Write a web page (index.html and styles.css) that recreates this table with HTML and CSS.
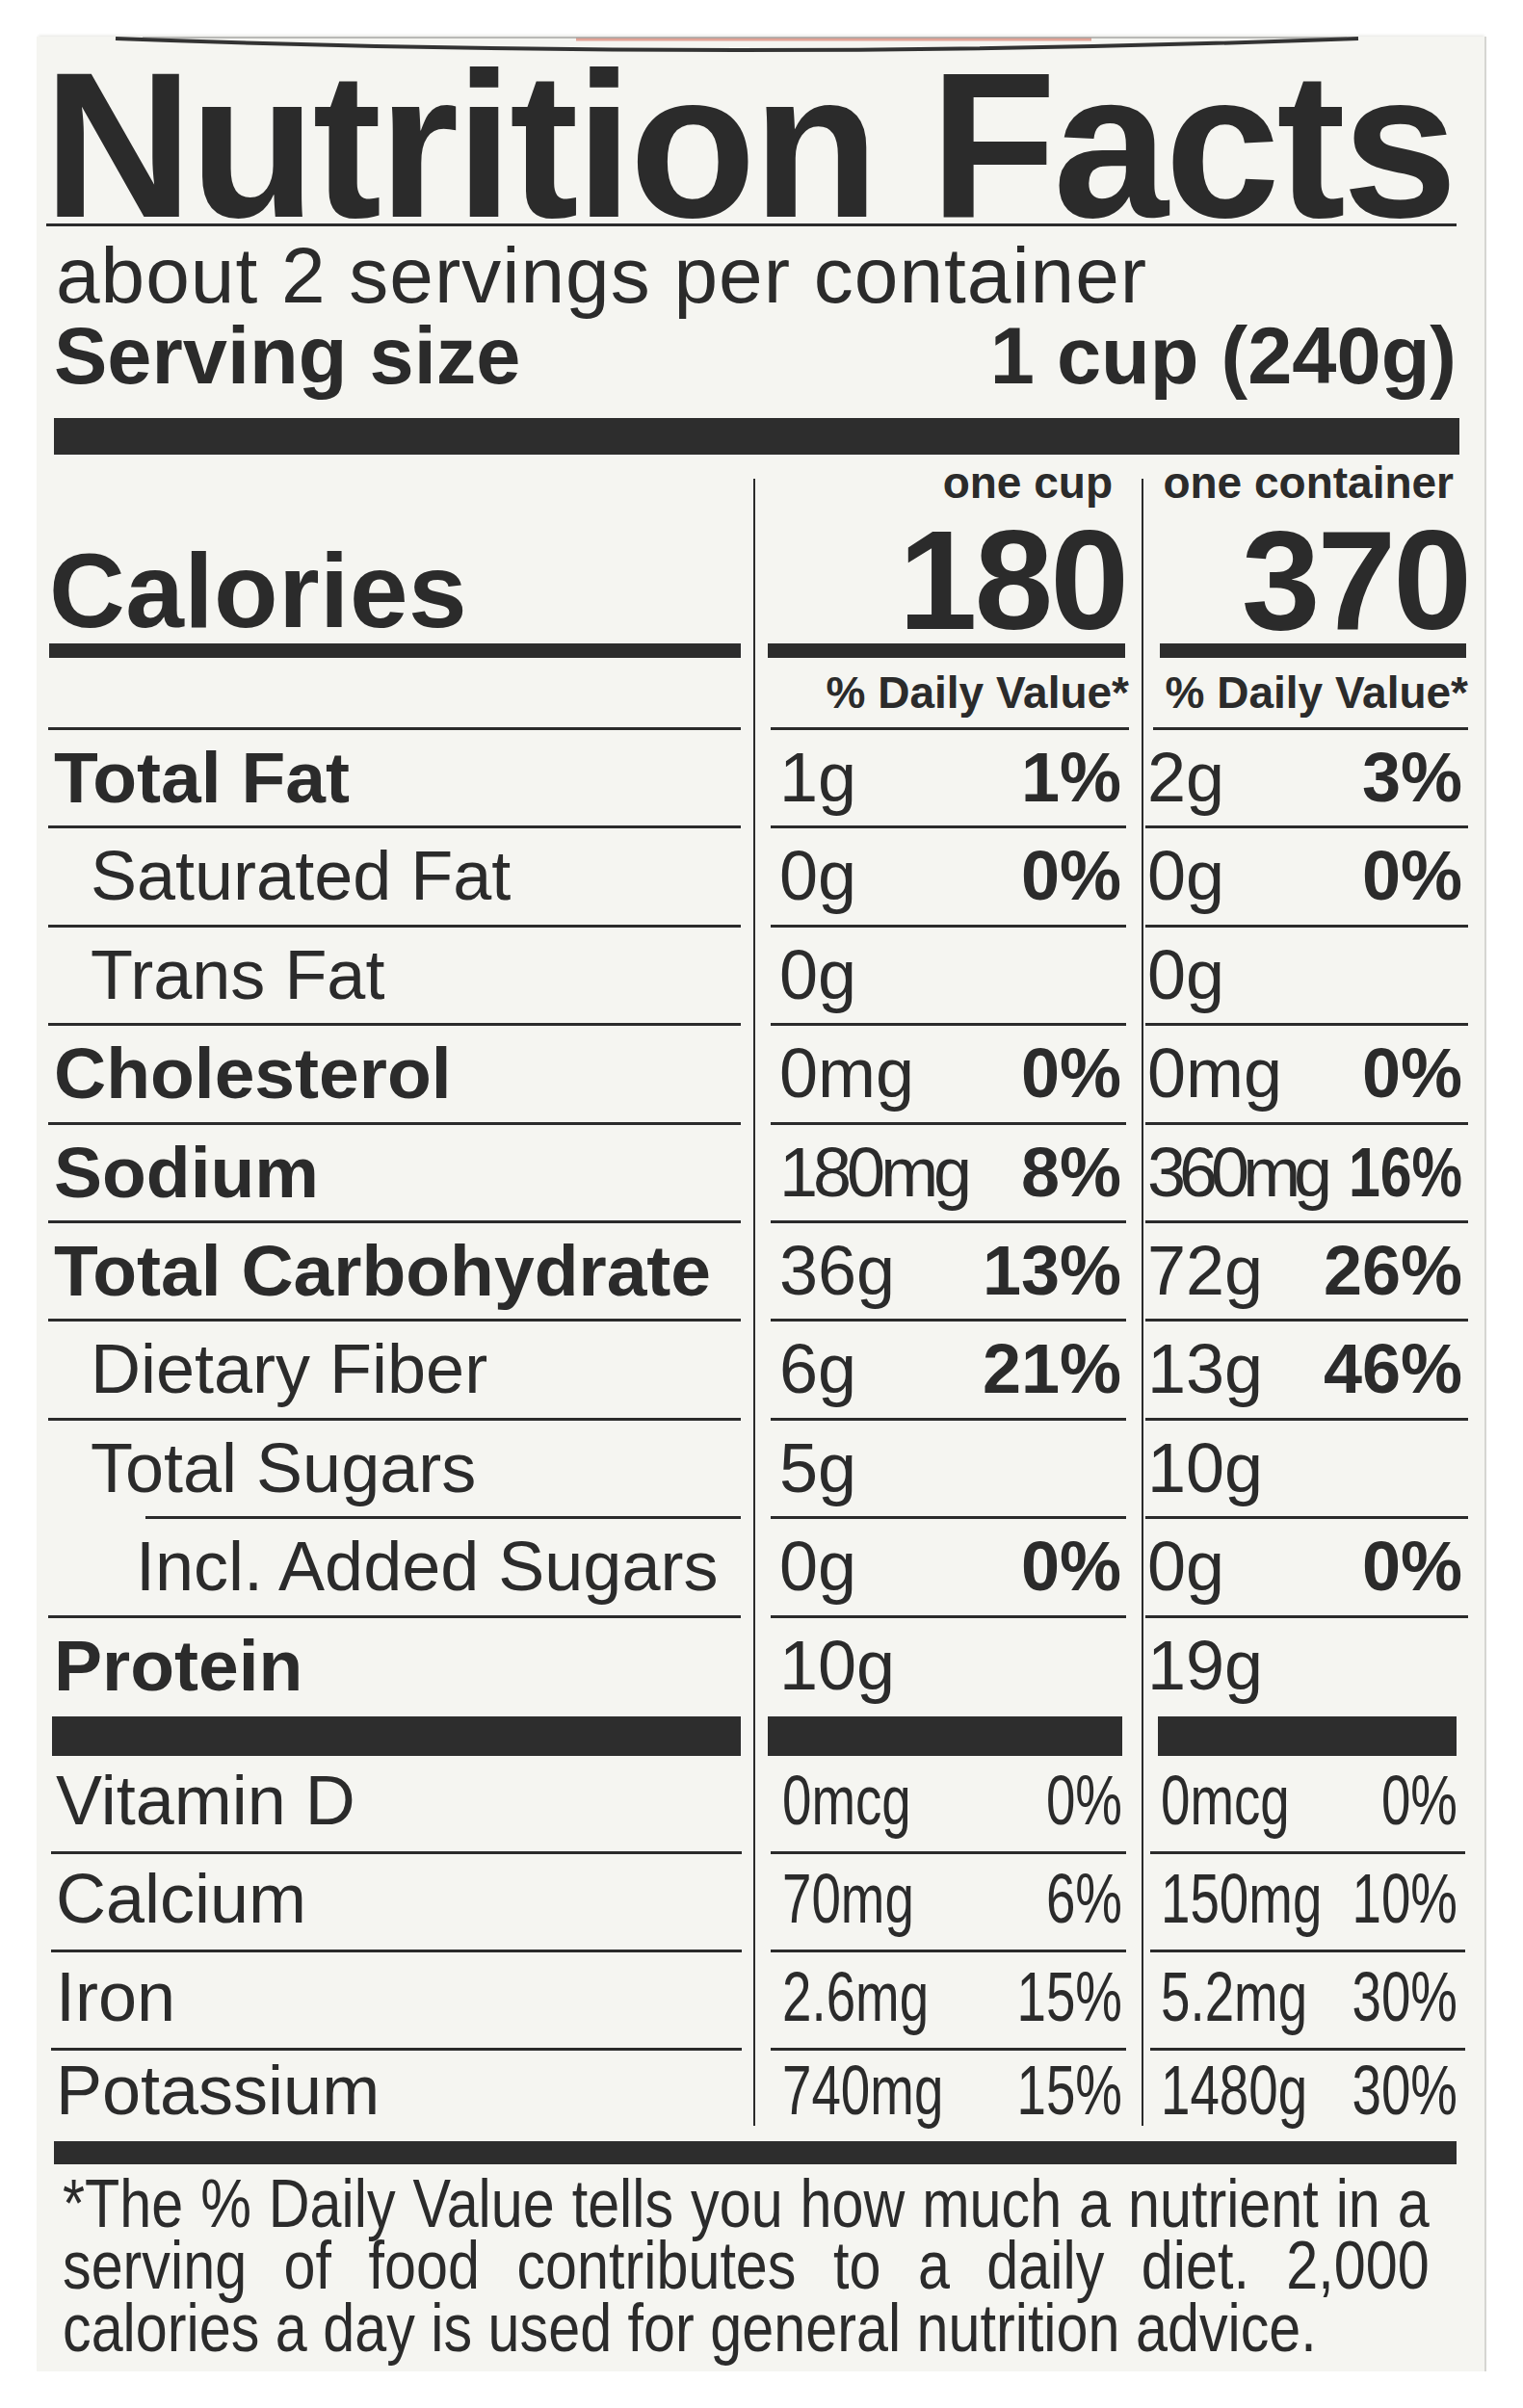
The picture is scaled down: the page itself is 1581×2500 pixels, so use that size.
FILE: index.html
```html
<!DOCTYPE html>
<html lang="en">
<head>
<meta charset="utf-8">
<title>Nutrition Facts</title>
<link rel="stylesheet" href="styles.css">
</head>
<body>
<div class="card">
  <svg class="rim" width="1505" height="24" viewBox="0 0 1505 24" aria-hidden="true">
    <path d="M560 3 L1095 3" stroke="#d2604c" stroke-width="3" stroke-opacity=".55" fill="none"/>
    <path d="M82 2 Q727 26 1372 2" stroke="#333" stroke-width="4" fill="none"/>
    <path d="M110 1 L1360 1" stroke="#555" stroke-width="1.5" stroke-opacity=".5" fill="none"/>
  </svg>

  <h1 class="title">Nutrition Facts</h1>
  <div class="servings">about 2 servings per container</div>
  <div class="size"><span>Serving size</span><span>1 cup (240g)</span></div>
  <div class="bar bar-top"></div>

  <div class="table">
    <div class="col col-label">
      <div class="hdr"><span class="cal">Calories</span></div>
      <div class="calbar"></div>
      <div class="dv"></div>
      <div class="row b">Total Fat</div>
      <div class="row i1">Saturated Fat</div>
      <div class="row i1">Trans Fat</div>
      <div class="row b">Cholesterol</div>
      <div class="row b">Sodium</div>
      <div class="row b">Total Carbohydrate</div>
      <div class="row i1">Dietary Fiber</div>
      <div class="row i1 short">Total Sugars</div>
      <div class="row i2">Incl. Added Sugars</div>
      <div class="row b last">Protein</div>
      <div class="thick"></div>
      <div class="vrow">Vitamin D</div>
      <div class="vrow">Calcium</div>
      <div class="vrow">Iron</div>
      <div class="vrow end">Potassium</div>
    </div>

    <div class="col col-a">
      <div class="hdr"><div class="per">one cup</div><div class="kcal">180</div></div>
      <div class="calbar"></div>
      <div class="dv">% Daily Value*</div>
      <div class="row"><span>1g</span><b>1%</b></div>
      <div class="row"><span>0g</span><b>0%</b></div>
      <div class="row"><span>0g</span></div>
      <div class="row"><span>0mg</span><b>0%</b></div>
      <div class="row"><span class="tight">180mg</span><b>8%</b></div>
      <div class="row"><span>36g</span><b>13%</b></div>
      <div class="row"><span>6g</span><b>21%</b></div>
      <div class="row"><span>5g</span></div>
      <div class="row"><span>0g</span><b>0%</b></div>
      <div class="row last"><span>10g</span></div>
      <div class="thick"></div>
      <div class="vrow"><div class="nv"><span>0mcg</span><span>0%</span></div></div>
      <div class="vrow"><div class="nv"><span>70mg</span><span>6%</span></div></div>
      <div class="vrow"><div class="nv"><span>2.6mg</span><span>15%</span></div></div>
      <div class="vrow end"><div class="nv"><span>740mg</span><span>15%</span></div></div>
    </div>

    <div class="col col-b">
      <div class="hdr"><div class="per">one container</div><div class="kcal">370</div></div>
      <div class="calbar"></div>
      <div class="dv">% Daily Value*</div>
      <div class="row"><span>2g</span><b>3%</b></div>
      <div class="row"><span>0g</span><b>0%</b></div>
      <div class="row"><span>0g</span></div>
      <div class="row"><span>0mg</span><b>0%</b></div>
      <div class="row"><span class="tighter">360mg</span><b class="squeeze">16%</b></div>
      <div class="row"><span>72g</span><b>26%</b></div>
      <div class="row"><span>13g</span><b>46%</b></div>
      <div class="row"><span>10g</span></div>
      <div class="row"><span>0g</span><b>0%</b></div>
      <div class="row last"><span>19g</span></div>
      <div class="thick"></div>
      <div class="vrow"><div class="nv"><span>0mcg</span><span>0%</span></div></div>
      <div class="vrow"><div class="nv"><span>150mg</span><span>10%</span></div></div>
      <div class="vrow"><div class="nv"><span>5.2mg</span><span>30%</span></div></div>
      <div class="vrow end"><div class="nv"><span>1480g</span><span>30%</span></div></div>
    </div>
  </div>

  <div class="bar bar-bottom"></div>

  <div class="foot">
    <div class="fl just">*The % Daily Value tells you how much a nutrient in a</div>
    <div class="fl just">serving of food contributes to a daily diet. 2,000</div>
    <div class="fl">calories a day is used for general nutrition advice.</div>
  </div>
</div>
</body>
</html>
```

FILE: styles.css
```css
html, body {
  margin: 0;
  padding: 0;
  background: #ffffff;
  overflow-x: hidden;
}

body {
  font-family: "Liberation Sans", Arial, Helvetica, sans-serif;
  color: #2b2b2b;
}

.card {
  position: relative;
  box-sizing: border-box;
  width: 1505px;
  height: 2424px;
  margin: 38px 0 0 38px;
  padding: 31px 17px 0 12px;
  background: #f5f5f1;
  border-right: 2px solid #d6d6d2;
  box-shadow: 0 -3px 3px -2px #e4e4e0;
}

.rim {
  position: absolute;
  left: 0;
  top: 0;
}

.title {
  margin: 0 12px 0 -2px;
  font-size: 215px;
  line-height: 163px;
  font-weight: 700;
  letter-spacing: -3.5px;
  text-indent: -3px;
  white-space: nowrap;
  border-bottom: 3px solid #2b2b2b;
}

.servings {
  margin-top: 9px;
  padding-left: 8px;
  font-size: 82px;
  line-height: 84px;
  letter-spacing: 1px;
  white-space: nowrap;
}

.size {
  display: flex;
  justify-content: space-between;
  margin-right: 12px;
  padding-left: 6px;
  font-size: 83px;
  line-height: 84px;
  font-weight: 700;
  white-space: nowrap;
}

.bar {
  background: #2d2d2d;
}

.bar-top {
  height: 38px;
  margin: 22px 9px 0 6px;
}

.table {
  display: flex;
  margin-top: 25px;
}

.col {
  display: flex;
  flex-direction: column;
  flex: none;
  min-width: 0;
}

.col-label {
  width: 719px;
  margin-right: 13px;
}

.col-a {
  width: 369px;
  padding: 0 16px;
  border-left: 2px solid #2b2b2b;
}

.col-b {
  width: 335px;
  padding-left: 2px;
  border-left: 2px solid #2b2b2b;
}

/* header */
.hdr {
  height: 171px;
  display: flex;
  flex-direction: column;
  justify-content: flex-end;
  align-items: flex-end;
}

.col-label .hdr {
  align-items: flex-start;
}

.cal {
  font-size: 109px;
  line-height: 109px;
  font-weight: 700;
  padding-left: 1px;
  letter-spacing: 0.5px;
}

.per {
  margin-top: -16px;
  margin-bottom: auto;
  font-size: 46px;
  line-height: 40px;
  font-weight: 700;
  white-space: nowrap;
}

.col-a .per { margin-right: 14px; }
.col-b .per { margin-right: 15px; }

.kcal {
  font-size: 147px;
  line-height: 132px;
  font-weight: 700;
  letter-spacing: -3px;
}

.col-b .kcal { margin-right: -1px; }

.calbar {
  height: 15px;
  background: #2d2d2d;
}

.col-label .calbar { margin-left: 1px; }
.col-a .calbar { margin: 0 1px 0 -3px; }
.col-b .calbar { margin: 0 2px 0 15px; }

.dv {
  box-sizing: border-box;
  height: 75px;
  border-bottom: 3px solid #2b2b2b;
  font-size: 46px;
  line-height: 72px;
  font-weight: 700;
  text-align: right;
  white-space: nowrap;
}

.col-a .dv { margin-right: -3px; }
.col-b .dv { margin-left: 8px; }

/* nutrient rows */
.row {
  box-sizing: border-box;
  height: 102.4px;
  border-bottom: 3px solid #2b2b2b;
  display: flex;
  justify-content: space-between;
  font-size: 72px;
  line-height: 99.4px;
  white-space: nowrap;
}

.row.last {
  border-bottom: none;
}

.row.b { font-weight: 700; font-size: 75px; padding-left: 6px; }
.row.i1 { padding-left: 44px; }
.row.i2 { padding-left: 91px; }

.row.short {
  border-bottom: none;
  background: linear-gradient(#2b2b2b, #2b2b2b) no-repeat 101px 100% / calc(100% - 101px) 3px;
}

.row b { font-weight: 700; }

.col-a .row { padding: 0 5px 0 9px; }
.col-b .row { padding: 0 6px 0 2px; }

.tight { letter-spacing: -5px; }
.tighter { letter-spacing: -7px; }

.squeeze {
  display: inline-block;
  margin-left: -30px;
  transform: scaleX(0.82);
  transform-origin: 100% 50%;
}

.thick {
  height: 41px;
  background: #2d2d2d;
}

.col-label .thick { margin-left: 4px; }
.col-a .thick { margin: 0 4px 0 -3px; }
.col-b .thick { margin: 0 12px 0 13px; }

/* vitamin rows */
.vrow {
  box-sizing: border-box;
  height: 102px;
  border-bottom: 3px solid #2b2b2b;
  font-size: 72px;
  line-height: 92px;
  white-space: nowrap;
}

.vrow.end {
  height: 78px;
  line-height: 82px;
  border-bottom: none;
}

.col-label .vrow { margin: 0 -1px 0 3px; padding-left: 5px; }
.col-a .vrow { padding: 0 4px 0 12px; }
.col-b .vrow { margin: 0 3px 0 5px; padding: 0 8px 0 11px; }

/* condensed amount / percent pair */
.nv {
  display: flex;
  justify-content: space-between;
  width: 131.58%;
  transform: scaleX(0.76);
  transform-origin: 0 50%;
}

.bar-bottom {
  height: 24px;
  margin: 16px 12px 0 6px;
}

/* footnote */
.foot {
  width: 1675px;
  margin: 9px 0 0 15px;
  font-size: 70px;
  line-height: 64.5px;
  transform: scaleX(0.847);
  transform-origin: 0 0;
}

.fl.just {
  text-align: justify;
  text-align-last: justify;
}
```
